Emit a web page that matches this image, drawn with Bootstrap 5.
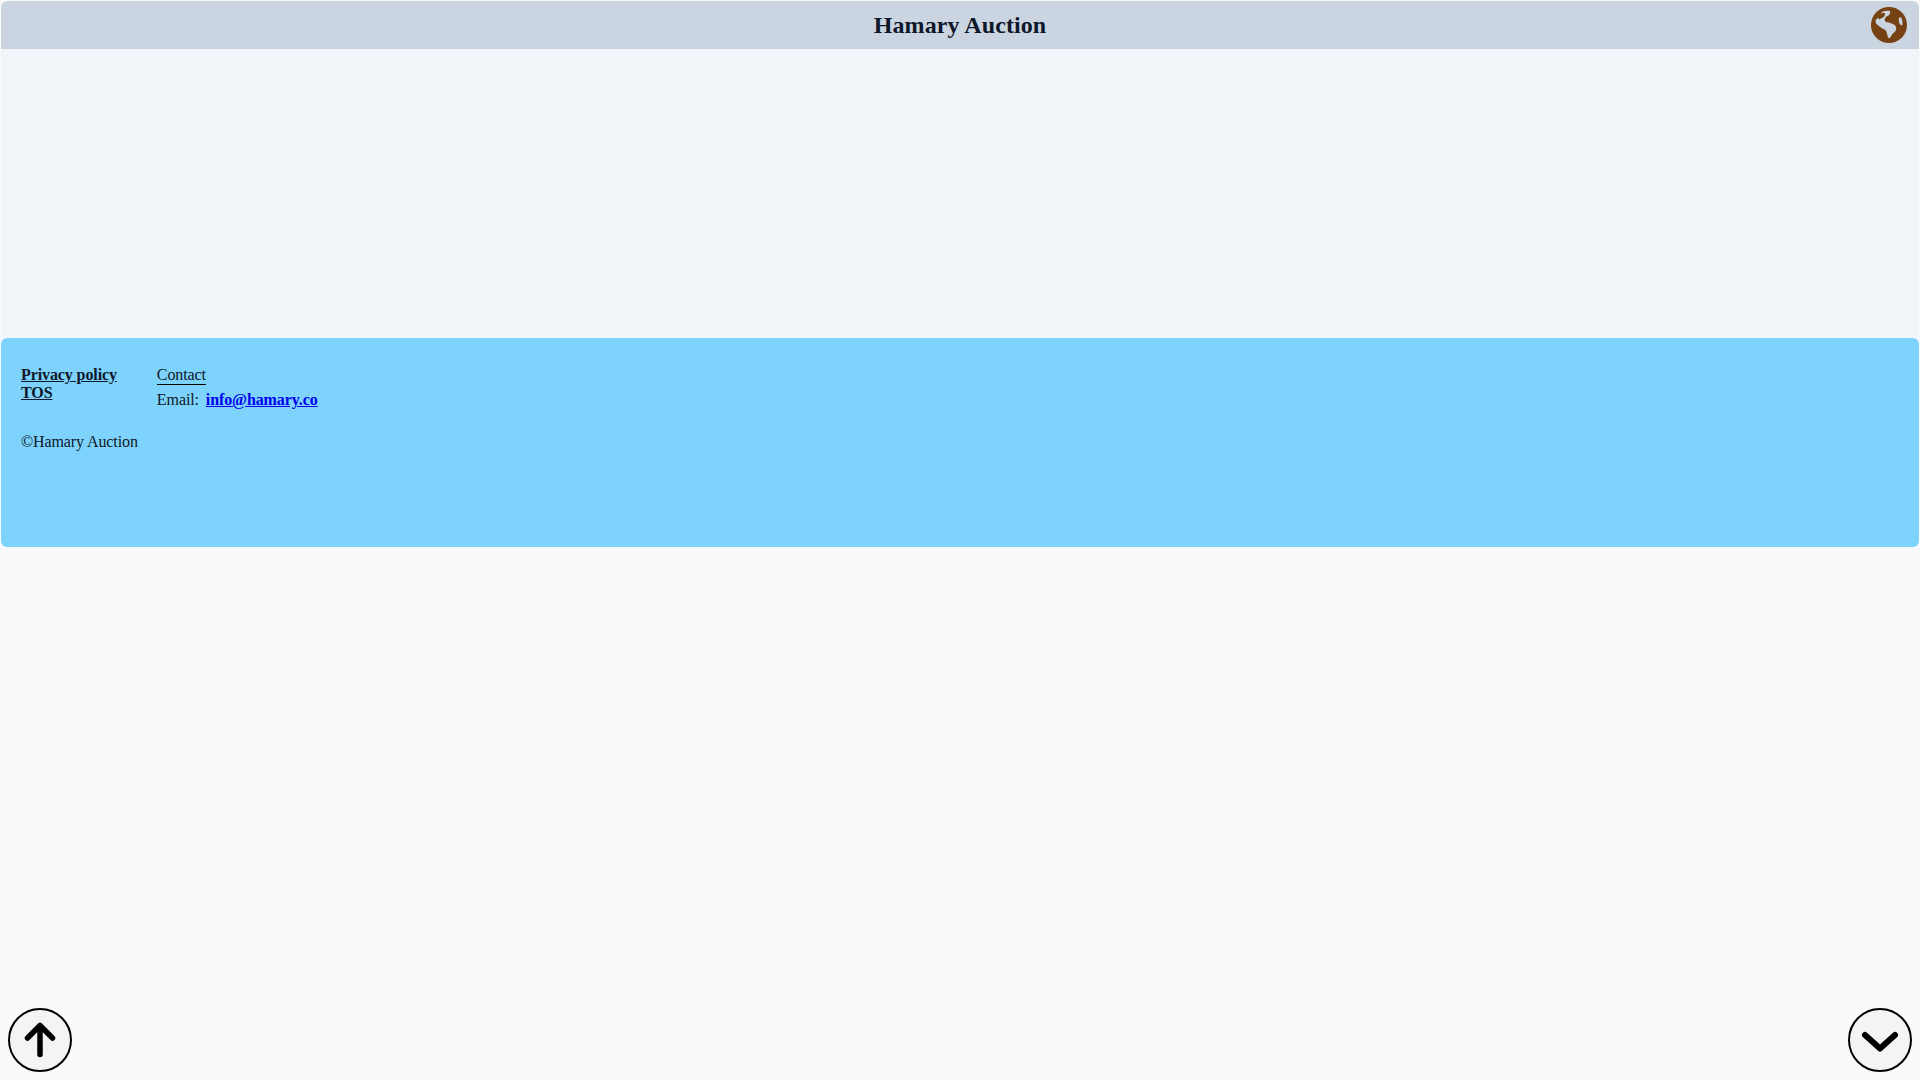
<!DOCTYPE html>
<html lang="en">
<head>
    <meta charset="UTF-8" />
    <title>Hamary Auction</title>
    <link href="https://cdn.jsdelivr.net/npm/bootstrap@5.3.3/dist/css/bootstrap.min.css" rel="stylesheet">
    <style>
        html, body { height: 100%; }
        body { background: #f8fafc; color: #0f172a; font-family: "Liberation Serif", "Times New Roman", serif; font-size: 16px; line-height: 18px; padding: 1px; }
        .top-bar { height: 48px; background: #cbd5e1; border-radius: 6px 6px 0 0; }
        .top-title { font-size: 24px; font-weight: 700; line-height: 28px; margin: 0; letter-spacing: .08px; }
        .globe-btn { right: 12px; top: 6px; width: 36px; height: 36px; }
        .main-area { height: 289px; background: #f1f5f9; }
        .site-footer { height: 209px; background: #7dd3fc; border-radius: 6px; padding: 28px 20px; gap: 19px; letter-spacing: -.1px; }
        .site-footer a { color: #0f172a; }
        .legal-links a { display: block; font-weight: 700; }
        .copy-line { margin-top: 31px; }
        .contact-head { display: inline-block; border-bottom: 1px solid #000; line-height: 18px; height: 19px; }
        .contact-mail { margin-top: 6px; }
        .site-footer a.mail-link { color: #0000ee; font-weight: 700; margin-left: 3px; }
        .round-btn { position: fixed; bottom: 8px; width: 64px; height: 64px; padding: 0; border: 2px solid #000; border-radius: 50%; background: #f3f4f6; }
        .round-up { left: 8px; }
        .round-down { right: 8px; }
        .round-btn svg { display: block; width: 100%; height: 100%; }
    </style>
</head>
<body>
    <header class="top-bar position-relative d-flex align-items-center justify-content-center">
        <h1 class="top-title">Hamary Auction</h1>
        <a class="globe-btn position-absolute d-block" href="#" aria-label="Language">
            <svg viewBox="0 0 36 36" width="36" height="36">
                <circle cx="18" cy="18" r="18" fill="#764214"/>
                <path fill="#cbd5e1" d="M11.700 4.500C14 3.600 17 3.400 19 4c.4 1.500 0 3-.9 4-1.300 1-3.500 1.500-4.100 3.300-.6 1.800-.4 3.200 1 3.600 1.500.4 3.500.6 5 1.300 2 .9 4.300 1.500 5 3.800.4 1.400.2 3-.7 4.200-1.200 1.300-2.600 2.200-3.600 3.700-.9 1.400-1.300 3.100-2.400 3.400-1.100-.1-1.600-2-2-3.300-.5-1.500-.6-3.500-1.700-4.800-1.300-1.300-3.500-1.600-5-3C7.200 18.600 5 17 4.600 15c-.3-1.800.8-3.300 2.400-4 1.700-.7 3-1.500 3-3 0-1.500.5-2.800 1.700-3.500z"/>
                <path fill="#764214" d="M10.500 6.500c1.500-1 3-1 3.500 0 .3 1-.5 2.500-1.500 3.500-1.200 1-3 1.800-4 2.300-1 .3-1.300-.5-.8-1.500.6-1.700 1.500-3.300 2.800-4.300z"/>
                <path fill="#cbd5e1" d="M28.500 10.500c1-.5 2 .5 2.500 2 .4 1.500.6 3.500.4 5-.2 1-1 1.200-1.700.5-1-1-1.700-2.500-1.800-4-.1-1.400-.2-3 .6-3.500z"/>
            </svg>
        </a>
    </header>

    <main class="main-area"></main>

    <footer class="site-footer d-flex">
        <div>
            <div class="legal-links">
                <a href="#">Privacy policy</a>
                <a href="#">TOS</a>
            </div>
            <div class="copy-line">©Hamary Auction</div>
        </div>
        <div>
            <div class="contact-head">Contact</div>
            <div class="contact-mail">Email: <a class="mail-link" href="#">info@hamary.co</a></div>
        </div>
    </footer>

    <button class="round-btn round-up" type="button" aria-label="Scroll up">
        <svg viewBox="0 0 60 60"><path d="M30 44.500V15.500M17.500 28 30 15.500 42.500 28" fill="none" stroke="#000" stroke-width="5.500" stroke-linecap="round" stroke-linejoin="round"/></svg>
    </button>
    <button class="round-btn round-down" type="button" aria-label="Scroll down">
        <svg viewBox="0 0 60 60"><path d="M15 25 30 38.500 45 25" fill="none" stroke="#000" stroke-width="6" stroke-linecap="round" stroke-linejoin="round"/></svg>
    </button>

    <script src="https://cdn.jsdelivr.net/npm/bootstrap@5.3.3/dist/js/bootstrap.bundle.min.js"></script>
</body>
</html>
